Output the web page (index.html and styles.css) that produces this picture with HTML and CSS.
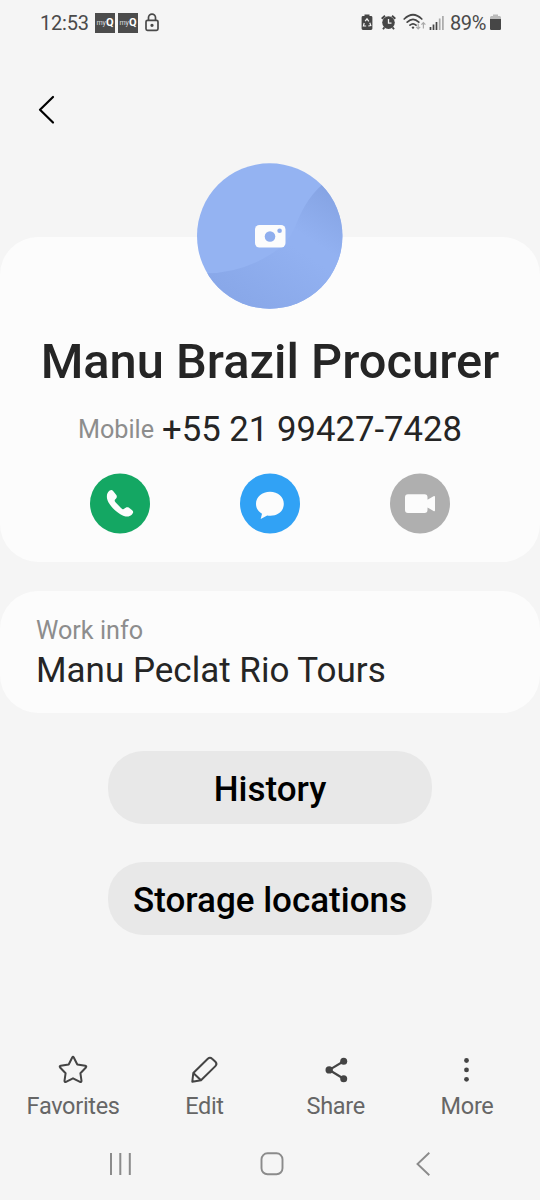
FILE: index.html
```html
<!DOCTYPE html>
<html lang="en">
<head>
<meta charset="utf-8">
<title>Contact</title>
<link rel="stylesheet" href="styles.css">
</head>
<body>
<div class="screen">
  <div class="status">
    <span class="time">12:53</span>
    <span class="app-badge"><i>my</i><b>Q</b></span>
    <span class="app-badge second"><i>my</i><b>Q</b></span>
    <svg class="lock" width="14" height="19" viewBox="0 0 14 19" fill="none" stroke="#4a4a4a" stroke-width="1.700"><rect x="1" y="7.300" width="12" height="10" rx="1.500"/><path d="M3.500 7V4.600a3.500 3.500 0 0 1 7 0V7"/><circle cx="7" cy="12.300" r=".8" fill="#4a4a4a"/></svg>
    <svg class="indicators" width="86" height="20" viewBox="0 0 86 20">
      <path d="M3.500 3V1.600h5V3H10q1.400 0 1.400 1.400v11.200Q11.400 17 10 17H2Q.6 17 .6 15.600V4.400Q.6 3 2 3z" fill="#464646"/>
      <path d="M4.200 8.200 6 5.800l1.800 2.500M8.800 9.800l1 2.700-2.500.5M5.200 13H2.400l.8-3" fill="none" stroke="#f5f5f5" stroke-width="1.200"/>
      <circle cx="27.500" cy="9.600" r="6.300" fill="#464646"/><path d="M20.700 5.800 24 2.800M34.300 5.800 31 2.800M23.500 14.300l-1.500 2M31.500 14.300l1.500 2" stroke="#464646" stroke-width="1.900"/><path d="M27.500 6v4.200h3" fill="none" stroke="#f5f5f5" stroke-width="1.300"/>
      <g fill="none" stroke="#464646" stroke-width="1.700" stroke-linecap="round"><path d="M43.200 6q8.800-8.500 17.600 0M46.200 9.200q5.800-5.600 11.600 0M49 12.200q3-2.800 6 0"/></g><circle cx="52" cy="14.600" r="1.200" fill="#464646"/>
      <path d="M57.200 10.500v5.200m-2-1.800 2 2 2-2M62.400 15.500v-5.800m-2 2 2-2 2 2" fill="none" stroke="#aaa" stroke-width="1.200"/>
      <path d="M69.500 14v3M72.500 11.500V17M75.500 9v8" stroke="#464646" stroke-width="1.700"/><path d="M78.700 5.500V17M81.900 3v14" stroke="#aaa" stroke-width="1.700"/>
    </svg>
    <span class="percent">89%</span>
    <svg class="battery" width="11" height="17" viewBox="0 0 11 17"><path d="M3 2V.5h5V2h1.600Q11 2 11 3.500V6H0V3.500Q0 2 1.400 2z" fill="#bbb"/><path d="M0 5h11v9.800q0 1.200-1.200 1.200H1.200Q0 16 0 14.800z" fill="#464646"/></svg>
  </div>
  <div class="toolbar">
    <svg width="18" height="30" viewBox="0 0 18 30" fill="none" stroke="#000" stroke-width="2.200" stroke-linecap="round" stroke-linejoin="round"><path d="M15 2 2 14.800 15 27.500"/></svg>
  </div>
  <main class="card profile">
    <svg class="avatar" width="146" height="146" viewBox="0 0 146 146">
      <defs>
        <clipPath id="disc"><circle cx="72.700" cy="73" r="72.700"/></clipPath>
        <linearGradient id="shade" gradientUnits="userSpaceOnUse" x1="130" y1="18" x2="50" y2="140"><stop offset="0" stop-color="#84a2e2"/><stop offset=".4" stop-color="#92b1f1"/><stop offset=".5" stop-color="#92b1f1"/><stop offset="1" stop-color="#89a8e9"/></linearGradient>
      </defs>
      <g clip-path="url(#disc)"><path d="M0 0h146v146H0z" fill="#94b3f2"/><path d="M0 110Q42 113 77 89Q91 80 98 64Q110 32 130 18L150 10V150H0z" fill="url(#shade)"/></g>
      <rect x="58" y="62" width="30.500" height="22.500" rx="4.500" fill="#fcfcfc"/><circle cx="73" cy="73.500" r="5.300" fill="#8faeee"/><circle cx="82.600" cy="67.800" r="2.300" fill="#8faeee"/>
    </svg>
    <h1>Manu Brazil Procurer</h1>
    <div class="phone"><span class="kind">Mobile</span><span class="number">+55 21 99427-7428</span></div>
    <div class="actions">
      <svg width="60" height="61" viewBox="0 -.5 60 61"><circle cx="30" cy="30" r="30" fill="#14a763"/><path d="M18.200 18.500c1.500-2 3.500-2.700 4.900-1.100l3.200 4.200c1 1.600.5 2.900-.7 3.900-1.500 1.200-1 2 .1 3.500l5.300 5.500c1.500 1.400 2.300 1.800 3.500.6 1.200-1.300 2.600-1.900 4.200-1l3.200 2.400c2 1.500 1.400 3.200-.2 4.800-2.700 2.500-6.700 2.300-11.400-.6-5.400-3.400-9.300-7.600-11.900-12-1.900-3.700-2.100-7.600-.2-10.200z" fill="#fcfcfc"/></svg>
      <svg width="60" height="61" viewBox="0 -.5 60 61"><circle cx="30" cy="30" r="30" fill="#31a2f5"/><path d="M30 18.200c-8 0-14 5-14 12 0 4.400 2.200 7.800 6 10l-1.300 5.300 6.500-3.500c9.900 1.500 16.600-4 16.600-11.800 0-7-5.800-12-13.800-12z" fill="#fcfcfc"/></svg>
      <svg width="60" height="61" viewBox="0 -.5 60 61"><circle cx="30" cy="30" r="30" fill="#afafaf"/><path d="M18 20.800h16.500q3 0 3 3v2.400l6-3.500q1.500-.7 1.500.7v13.300q0 1.500-1.500.7l-6-3.500v2.600q0 3-3 3H18q-3 0-3-3V23.800q0-3 3-3z" fill="#fcfcfc"/></svg>
    </div>
  </main>
  <section class="card work"><div class="label">Work info</div><div class="value">Manu Peclat Rio Tours</div></section>
  <div class="buttons"><button>History</button><button>Storage locations</button></div>
  <nav class="bottom">
    <div class="item"><svg width="32" height="32" viewBox="0 0 32 32" fill="none" stroke="#444" stroke-width="2" stroke-linejoin="round"><path d="M15.100 3.700Q16 2 16.900 3.700l3.400 6.800 8 1.300q1.600.4.600 1.700l-5.500 5.700 1.100 7.700q-.1 1.600-1.500 1L16 24.300l-7 3.600q-1.400.6-1.500-1l1.100-7.700-5.500-5.700q-1-1.300.6-1.700l8-1.300z"/></svg><span>Favorites</span></div>
    <div class="item"><svg width="32" height="32" viewBox="0 0 32 32" fill="none" stroke="#444" stroke-width="2" stroke-linejoin="round"><path d="M4.300 27.700 5.300 19 19.800 4.800q2.200-2.100 4.300 0l3.300 3q2.100 2.200 0 4.300L13 26.300z M5.300 19 13 26.300"/></svg><span>Edit</span></div>
    <div class="item"><svg width="32" height="32" viewBox="0 0 32 32" fill="#444"><path d="M23.700 7.200 9.300 15.900 23.700 24.700" fill="none" stroke="#444" stroke-width="2.200"/><circle cx="23.700" cy="7.200" r="3.500"/><circle cx="9.200" cy="15.900" r="3.700"/><circle cx="23.700" cy="24.700" r="3.500"/></svg><span>Share</span></div>
    <div class="item"><svg width="32" height="32" viewBox="0 0 32 32" fill="#444"><circle cx="15.500" cy="6.500" r="2.400"/><circle cx="15.500" cy="15.900" r="2.400"/><circle cx="15.500" cy="25.300" r="2.400"/></svg><span>More</span></div>
  </nav>
  <div class="system">
    <svg width="22" height="24" viewBox="0 0 22 24" stroke="#8b8b8b" stroke-width="2"><path d="M2 1v22M11.300 1v22M20.800 1v22"/></svg>
    <svg class="home" width="24" height="24" viewBox="0 0 24 24" fill="none" stroke="#8b8b8b" stroke-width="1.900"><rect x="1.500" y="1.300" width="21" height="21" rx="6"/></svg>
    <svg width="16" height="24" viewBox="0 0 16 24" fill="none" stroke="#8b8b8b" stroke-width="1.900"><path d="M14.300.8 2.500 12 14.300 23.300"/></svg>
  </div>
</div>
</body>
</html>
```
FILE: styles.css
```css
* { box-sizing: border-box; }
body { margin: 0; background: #f5f5f5; font-family: Roboto, sans-serif; color: #252525; }
svg { display: block; flex: none; }
.screen { width: 540px; height: 1200px; overflow: hidden; display: flex; flex-direction: column; }
.status { height: 45px; flex: none; display: flex; align-items: center; padding: 0 39px 0 40px; color: #4a4a4a; }
.time { width: 55px; font-size: 20px; letter-spacing: -.2px; }
.app-badge { width: 20px; height: 20px; background: #4c4c4c; color: #fff; display: flex; align-items: center; justify-content: center; line-height: 20px; }
.app-badge i { font-style: normal; font-size: 7px; color: #ddd; }
.app-badge b { font-size: 11px; }
.second { margin-left: 3px; }
.lock { margin-left: 7px; }
.indicators { margin-left: auto; margin-top: 1px; }
.percent { font-size: 20px; width: 39px; margin-left: 3px; letter-spacing: -.4px; }
.battery { margin-left: 1px; }
.toolbar { height: 192px; padding: 50px 0 0 38px; flex: none; }
.card { width: 540px; flex: none; background: #fcfcfc; border-radius: 38px; }
.profile { height: 325px; display: flex; flex-direction: column; align-items: center; }
.avatar { margin-top: -74px; }
h1 { margin: 24px 0 0; font-size: 48.8px; line-height: 58px; font-weight: 500; white-space: nowrap; }
.phone { display: flex; align-items: flex-start; gap: 8px; height: 42px; margin-top: 18px; line-height: 42px; white-space: nowrap; }
.kind, .label { font-size: 25.2px; color: #8d8d8d; }
.number { font-size: 34.7px; line-height: 40px; }
.actions { width: 360px; display: flex; justify-content: space-between; margin-top: 22px; }
.work { height: 122px; margin-top: 29px; padding: 25px 36px; }
.label { line-height: 30px; }
.value { font-size: 35px; line-height: 42px; margin-top: 4px; white-space: nowrap; }
.buttons { display: flex; flex-direction: column; align-items: center; gap: 38px; margin-top: 38px; }
button { width: 324px; height: 73px; padding: 5px 0 0; border: 0; border-radius: 35px; background: #e8e8e8; color: #000; font: 500 35px/42px Roboto, sans-serif; white-space: nowrap; }
.bottom { display: grid; grid-template-columns: repeat(4, 131.300px); padding-left: 7.500px; margin-top: 119px; }
.item { display: flex; flex-direction: column; align-items: center; color: #666; font-size: 23.500px; line-height: 30px; letter-spacing: -.3px; }
.item span { margin-top: 5px; }
.system { display: flex; align-items: center; justify-content: space-between; padding: 0 109px; margin-top: 31px; }
.home { margin-right: 3px; }
```
